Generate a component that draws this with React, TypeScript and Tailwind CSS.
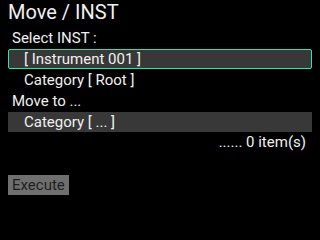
export default function App() {
  return (
    <div className="w-[320px] h-[240px] bg-black text-[#f0f0f0] overflow-hidden flex flex-col" style={{ fontFamily: "Roboto, 'Liberation Sans', sans-serif" }}>
      <div className="h-[24px] leading-[24px] text-[20px] pl-2">Move / INST</div>
      <div className="mt-1 h-[20px] leading-[20px] text-[15px] pl-3">Select INST :</div>
      <div className="mt-[1px] mx-2 h-[20px] border border-[#36e0b5] rounded-[2px] bg-[#383838] leading-[18px] text-[15px] pl-[15px]">[ Instrument 001 ]</div>
      <div className="mt-[1px] h-[20px] leading-[20px] text-[15px] pl-6">Category [ Root ]</div>
      <div className="mt-[1px] h-[20px] leading-[20px] text-[15px] pl-3">Move to ...</div>
      <div className="mt-[1px] mx-2 h-[20px] bg-[#383838] leading-[20px] text-[15px] pl-4">Category [ ... ]</div>
      <div className="h-[20px] leading-[20px] text-[15px] text-right pr-[14px]">...... 0 item(s)</div>
      <div className="mt-[23px] ml-2 self-start h-[20px] leading-[20px] text-[15px] bg-[#6f6f6f] text-[#1e1e1e] px-1">Execute</div>
    </div>
  );
}
